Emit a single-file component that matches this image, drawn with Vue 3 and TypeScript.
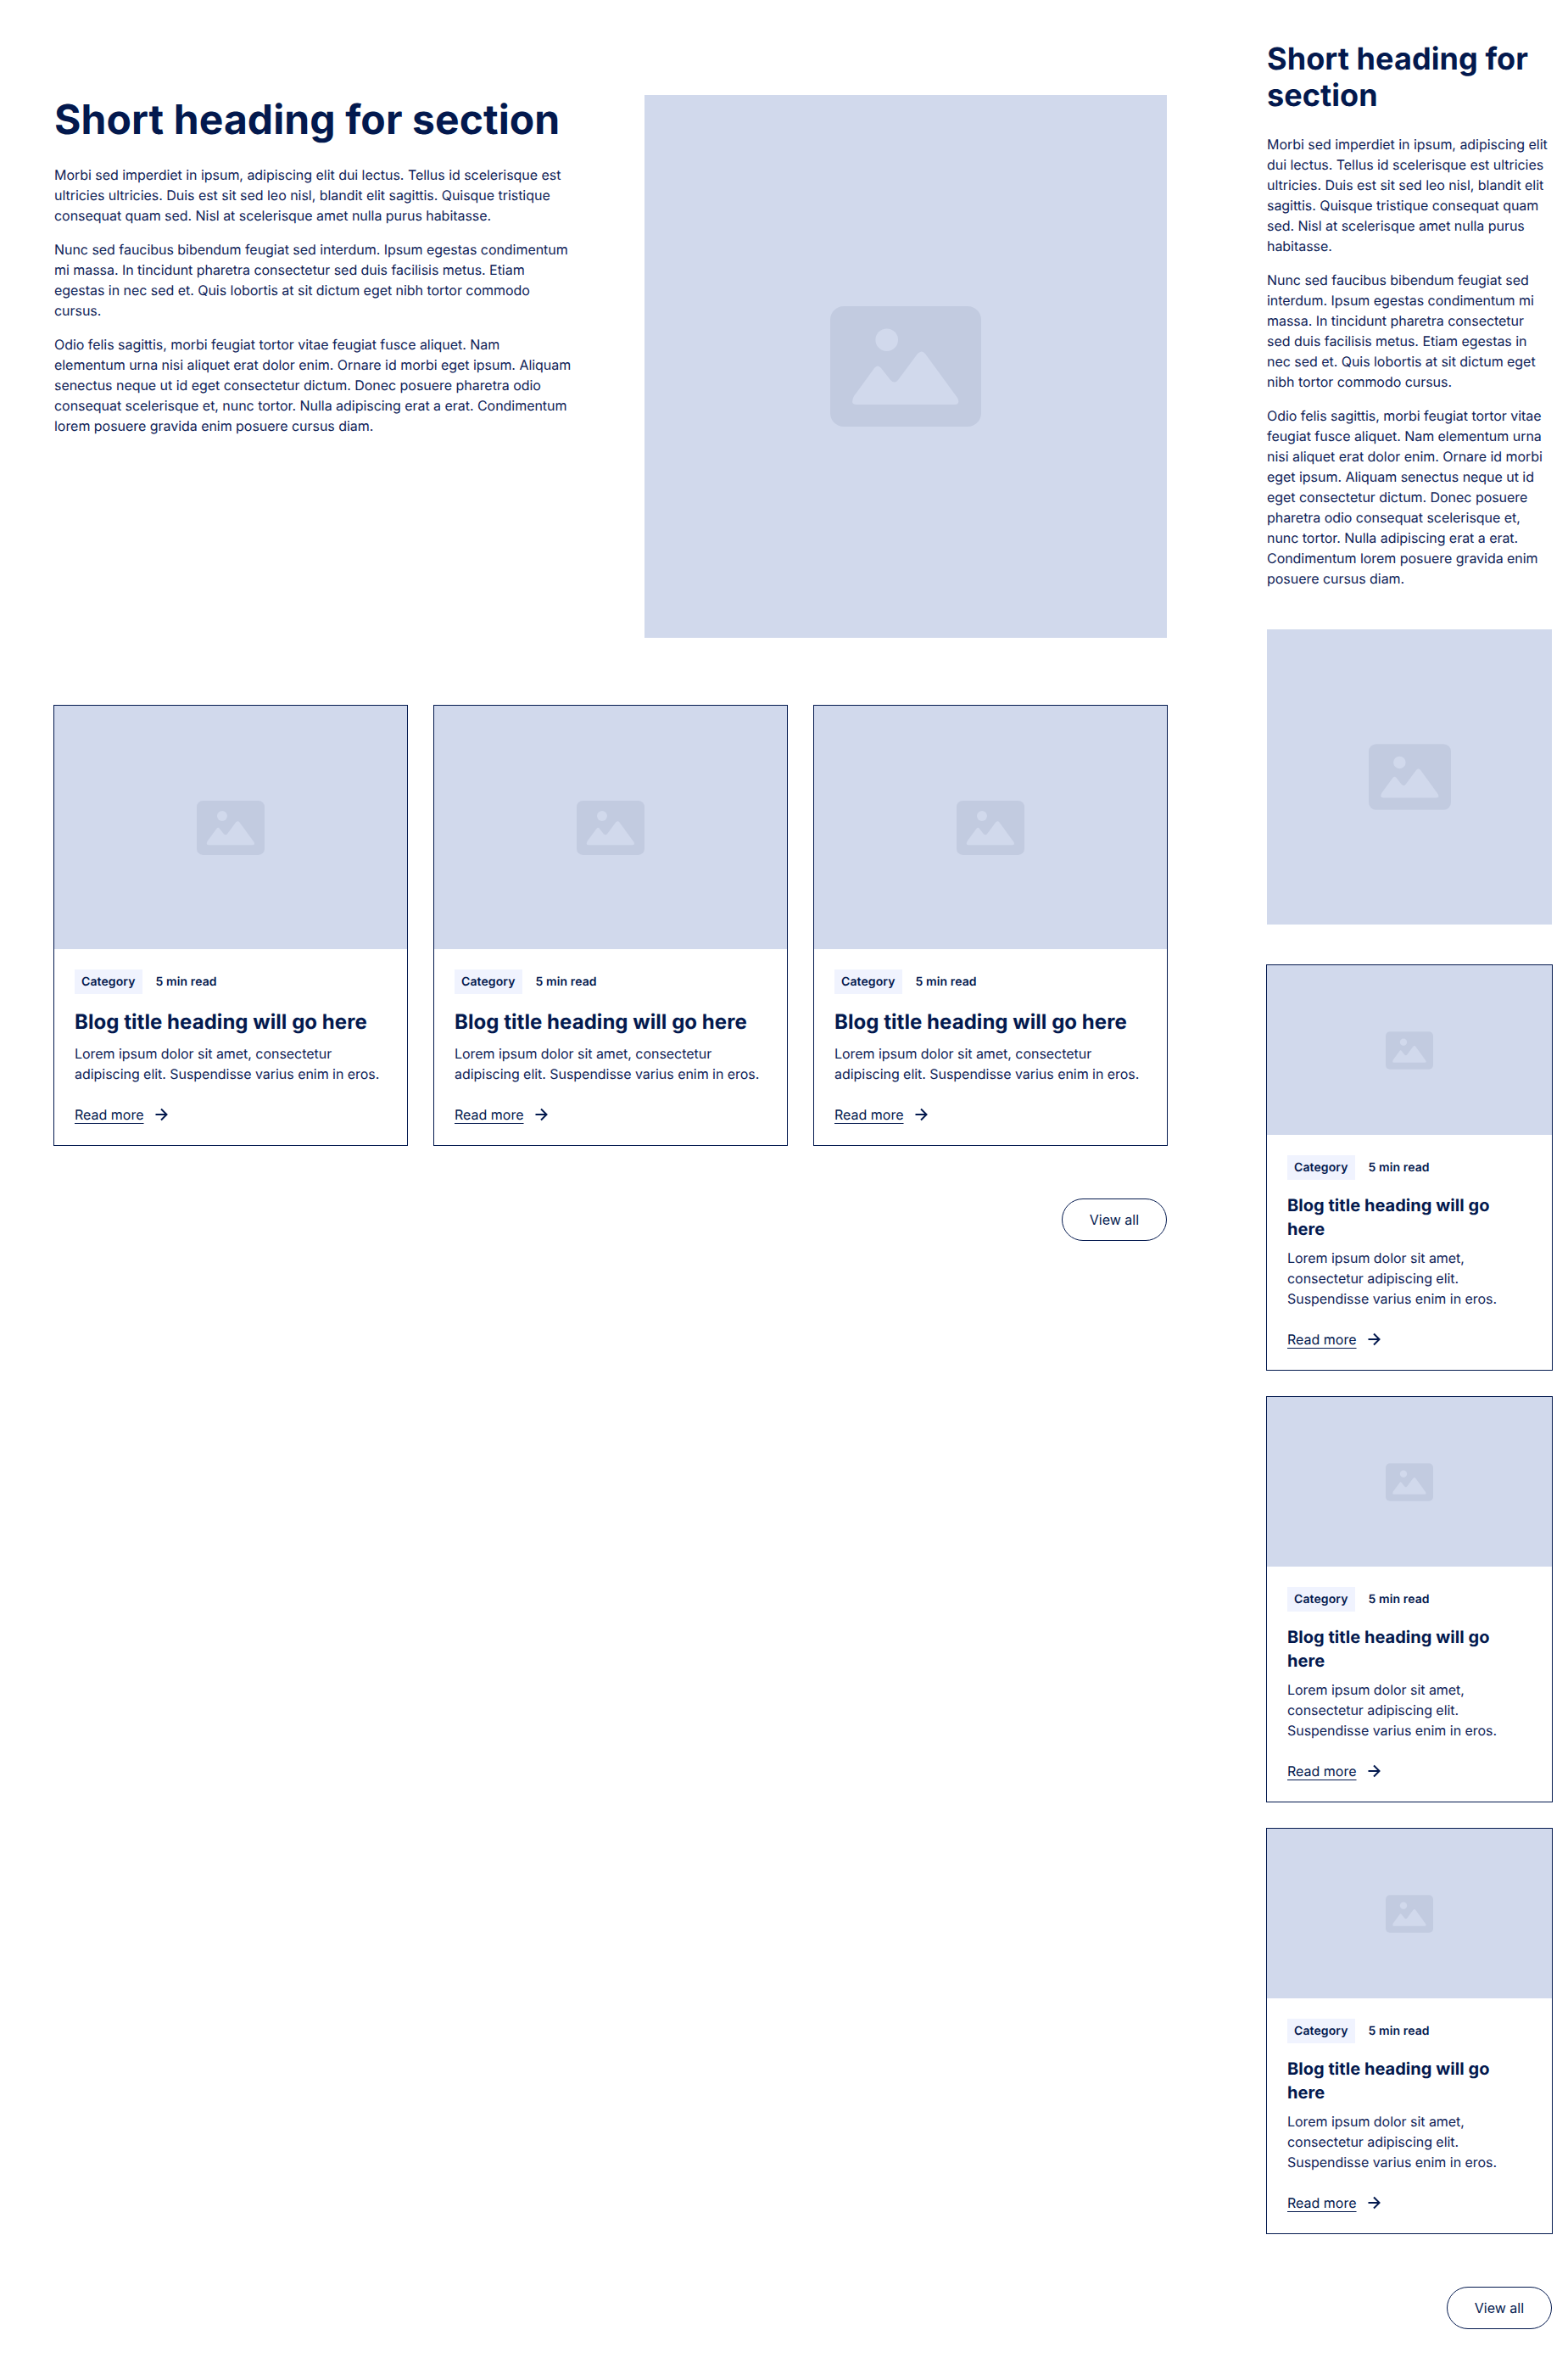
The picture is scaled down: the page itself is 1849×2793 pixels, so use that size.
<script setup lang="ts">
const paragraphs = [
  "Morbi sed imperdiet in ipsum, adipiscing elit dui lectus. Tellus id scelerisque est ultricies ultricies. Duis est sit sed leo nisl, blandit elit sagittis. Quisque tristique consequat quam sed. Nisl at scelerisque amet nulla purus habitasse.",
  "Nunc sed faucibus bibendum feugiat sed interdum. Ipsum egestas condimentum mi massa. In tincidunt pharetra consectetur sed duis facilisis metus. Etiam egestas in nec sed et. Quis lobortis at sit dictum eget nibh tortor commodo cursus.",
  "Odio felis sagittis, morbi feugiat tortor vitae feugiat fusce aliquet. Nam elementum urna nisi aliquet erat dolor enim. Ornare id morbi eget ipsum. Aliquam senectus neque ut id eget consectetur dictum. Donec posuere pharetra odio consequat scelerisque et, nunc tortor. Nulla adipiscing erat a erat. Condimentum lorem posuere gravida enim posuere cursus diam.",
];

const layouts = [
  { name: "wide", posts: [1, 2, 3] },
  { name: "narrow", posts: [1, 2, 3] },
];
</script>

<template>
  <div class="page">
    <section v-for="layout in layouts" :key="layout.name" :class="['section', layout.name]">
      <div class="intro">
        <div class="copy">
          <h2>Short heading for section</h2>
          <p v-for="text in paragraphs" :key="text">{{ text }}</p>
        </div>
        <div class="placeholder hero">
          <svg class="picture" viewBox="0 0 178 142" aria-hidden="true">
            <rect width="178" height="142" rx="16" fill="#c2cbe0" />
            <circle cx="66.7" cy="39.7" r="13.3" fill="#d1d9ec" />
            <path
              d="M31 116H146Q154 116 150 108L112 56Q108 51 103 56L80 87Q76 92 71 87L60 73Q56 68 52 73L28 106Q23 116 31 116Z"
              fill="#d1d9ec"
            />
          </svg>
        </div>
      </div>

      <div class="posts">
        <article v-for="post in layout.posts" :key="post" class="card">
          <div class="placeholder thumb">
            <svg class="picture" viewBox="0 0 178 142" aria-hidden="true">
              <rect width="178" height="142" rx="16" fill="#c2cbe0" />
              <circle cx="66.7" cy="39.7" r="13.3" fill="#d1d9ec" />
              <path
                d="M31 116H146Q154 116 150 108L112 56Q108 51 103 56L80 87Q76 92 71 87L60 73Q56 68 52 73L28 106Q23 116 31 116Z"
                fill="#d1d9ec"
              />
            </svg>
          </div>
          <div class="body">
            <div class="meta">
              <span class="tag">Category</span>
              <span>5 min read</span>
            </div>
            <h3>Blog title heading will go here</h3>
            <p>Lorem ipsum dolor sit amet, consectetur adipiscing elit. Suspendisse varius enim in eros.</p>
            <a class="more" href="#">
              <span>Read more</span>
              <svg viewBox="0 0 24 24" fill="none" stroke="currentColor" stroke-width="2" aria-hidden="true">
                <path d="M5.5 12h13M12 5.5l6.5 6.5-6.5 6.5" />
              </svg>
            </a>
          </div>
        </article>
      </div>

      <div class="actions">
        <button type="button">View all</button>
      </div>
    </section>
  </div>
</template>

<style scoped>
.page {
  display: flex;
  justify-content: space-between;
  align-items: flex-start;
  padding: 0 19px 0 64px;
  color: #03194e;
  font-family: Inter, "Liberation Sans", sans-serif;
  font-size: 16px;
  line-height: 24px;
  text-rendering: geometricPrecision;
}

.section {
  flex: none;
}

.wide {
  width: 1312px;
  padding-top: 112px;
}

.narrow {
  width: 336px;
  padding-top: 48px;
}

h2 {
  margin: 0 0 24px;
  font-weight: 700;
  line-height: 1.2;
  letter-spacing: 0.002em;
}

.wide h2 {
  font-size: 48px;
}

.narrow h2 {
  font-size: 36px;
}

.copy p {
  margin: 0 0 16px;
  color: #0f2358;
  letter-spacing: -0.04px;
}

.wide .copy p {
  max-width: 610px;
}

.narrow .copy p {
  max-width: 334px;
}

.copy p:last-child {
  margin-bottom: 0;
}

.intro {
  display: grid;
}

.wide .intro {
  grid-template-columns: 616px 616px;
  gap: 80px;
  align-items: start;
}

.narrow .intro {
  gap: 48px;
}

.placeholder {
  display: flex;
  align-items: center;
  justify-content: center;
  background: #d1d9ec;
}

.hero {
  height: 640px;
}

.narrow .hero {
  height: 348px;
}

.picture {
  display: block;
}

.hero .picture {
  width: 178px;
  height: 142px;
}

.narrow .hero .picture {
  width: 97px;
  height: 78px;
}

.posts {
  display: grid;
  gap: 32px;
}

.wide .posts {
  grid-template-columns: repeat(3, 1fr);
  margin-top: 80px;
}

.narrow .posts {
  margin-top: 48px;
}

.card {
  outline: 1px solid #03194e;
}

.thumb {
  height: 287px;
}

.narrow .thumb {
  height: 200px;
}

.thumb .picture {
  width: 80px;
  height: 64px;
}

.narrow .thumb .picture {
  width: 56px;
  height: 45px;
}

.body {
  padding: 24px;
}

.meta {
  display: flex;
  align-items: center;
  gap: 16px;
  margin-bottom: 16px;
  font-size: 14px;
  font-weight: 600;
  line-height: 21px;
  letter-spacing: 0.1px;
}

.tag {
  padding: 4px 8px;
  background: #f0f3fe;
}

h3 {
  margin: 0 0 8px;
  font-weight: 700;
  line-height: 1.4;
  letter-spacing: 0.002em;
}

.wide h3 {
  font-size: 24px;
}

.narrow h3 {
  max-width: 280px;
  font-size: 20px;
}

.body p {
  margin: 0 0 24px;
  color: #0f2358;
  letter-spacing: -0.04px;
}

.more {
  display: flex;
  align-items: center;
  gap: 8px;
  color: inherit;
  text-decoration: none;
}

.more span {
  text-decoration: underline;
  text-decoration-thickness: 1px;
  text-underline-offset: 4px;
}

.more svg {
  width: 24px;
  height: 24px;
}

.actions {
  display: flex;
  justify-content: flex-end;
  margin-top: 63px;
}

button {
  padding: 12px 32px;
  border: 1px solid #03194e;
  border-radius: 100px;
  background: #fff;
  color: inherit;
  font: inherit;
}
</style>
